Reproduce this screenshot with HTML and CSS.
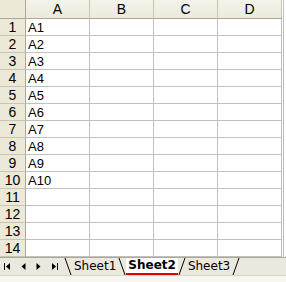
FILE: index.html
```html
<!DOCTYPE html>
<html>

<head>
    <title>Book1</title>
    <link rel="stylesheet" href="styles.css">
</head>

<body>
    <!-- ตารางแผ่นงาน -->
    <div class="sheet">
        <div class="corner"></div>
        <div class="col-head">A</div>
        <div class="col-head">B</div>
        <div class="col-head">C</div>
        <div class="col-head">D</div>

        <div class="row-head">1</div><div class="cell">A1</div><div class="cell"></div><div class="cell"></div><div class="cell"></div>
        <div class="row-head">2</div><div class="cell">A2</div><div class="cell"></div><div class="cell"></div><div class="cell"></div>
        <div class="row-head">3</div><div class="cell">A3</div><div class="cell"></div><div class="cell"></div><div class="cell"></div>
        <div class="row-head">4</div><div class="cell">A4</div><div class="cell"></div><div class="cell"></div><div class="cell"></div>
        <div class="row-head">5</div><div class="cell">A5</div><div class="cell"></div><div class="cell"></div><div class="cell"></div>
        <div class="row-head">6</div><div class="cell">A6</div><div class="cell"></div><div class="cell"></div><div class="cell"></div>
        <div class="row-head">7</div><div class="cell">A7</div><div class="cell"></div><div class="cell"></div><div class="cell"></div>
        <div class="row-head">8</div><div class="cell">A8</div><div class="cell"></div><div class="cell"></div><div class="cell"></div>
        <div class="row-head">9</div><div class="cell">A9</div><div class="cell"></div><div class="cell"></div><div class="cell"></div>
        <div class="row-head">10</div><div class="cell">A10</div><div class="cell"></div><div class="cell"></div><div class="cell"></div>
        <div class="row-head">11</div><div class="cell"></div><div class="cell"></div><div class="cell"></div><div class="cell"></div>
        <div class="row-head">12</div><div class="cell"></div><div class="cell"></div><div class="cell"></div><div class="cell"></div>
        <div class="row-head">13</div><div class="cell"></div><div class="cell"></div><div class="cell"></div><div class="cell"></div>
        <div class="row-head">14</div><div class="cell"></div><div class="cell"></div><div class="cell"></div><div class="cell"></div>
    </div>

    <!-- แถบแท็บแผ่นงาน -->
    <div class="tab-bar">
        <div class="nav">
            <svg width="7" height="7" viewBox="0 0 7 7"><rect x="0" y="0" width="1" height="7" fill="#000"/><path d="M6 0 L2 3.5 L6 7 Z" fill="#000"/></svg>
            <svg width="5" height="7" viewBox="0 0 5 7"><path d="M4.5 0 L0.5 3.5 L4.5 7 Z" fill="#000"/></svg>
            <svg width="5" height="7" viewBox="0 0 5 7"><path d="M0.5 0 L4.5 3.5 L0.5 7 Z" fill="#000"/></svg>
            <svg width="7" height="7" viewBox="0 0 7 7"><path d="M1 0 L5 3.5 L1 7 Z" fill="#000"/><rect x="6" y="0" width="1" height="7" fill="#000"/></svg>
        </div>
        <svg class="slant" width="8" height="17" viewBox="0 0 8 17"><line x1="1" y1="0" x2="7" y2="17" stroke="#000" stroke-width="1"/></svg>
        <span class="tab">Sheet1</span>
        <svg class="slant" width="8" height="17" viewBox="0 0 8 17"><line x1="1" y1="0" x2="7" y2="17" stroke="#000" stroke-width="1"/></svg>
        <span class="tab active">Sheet2</span>
        <svg class="slant" width="8" height="17" viewBox="0 0 8 17"><line x1="7" y1="0" x2="1" y2="17" stroke="#000" stroke-width="1"/></svg>
        <span class="tab">Sheet3</span>
        <svg class="slant" width="8" height="17" viewBox="0 0 8 17"><line x1="7" y1="0" x2="1" y2="17" stroke="#000" stroke-width="1"/></svg>
    </div>

    <!-- แถบเลื่อนด้านล่าง -->
    <div class="bottom-strip"></div>
</body>

</html>
```

FILE: styles.css
```css
body {
    margin: 0;
    background-color: #ffffff;
    font-family: "Liberation Sans", Arial, sans-serif;
    width: 286px;
    overflow: hidden;
}

/* ตาราง */
.sheet {
    display: grid;
    grid-template-columns: 26px repeat(4, 64px);
    grid-template-rows: 19px repeat(14, 17px);
    border-right: 1px solid #c0c0c0;
    width: 283px;
}

.corner,
.col-head,
.row-head {
    background-color: #ece9d8;
    box-sizing: border-box;
    border-right: 1px solid #aca899;
    border-bottom: 1px solid #aca899;
    font-size: 14px;
    color: #000;
    display: flex;
    align-items: center;
    justify-content: center;
}

.col-head {
    background: linear-gradient(#f4f3ea, #ebeadb);
    border-right: 1px solid #c7c5b2;
}

.row-head {
    border-right: 1px solid #aca899;
    border-bottom: 1px solid #c7c5b2;
}

.cell {
    box-sizing: border-box;
    border-right: 1px solid #c0c0c0;
    border-bottom: 1px solid #c0c0c0;
    font-size: 13px;
    padding-left: 2px;
    display: flex;
    align-items: center;
}

/* แท็บ */
.tab-bar {
    height: 17px;
    background-color: #ebe9de;
    border-top: 1px solid #aca899;
    display: flex;
    align-items: center;
    font-family: "DejaVu Sans", Tahoma, sans-serif;
    font-size: 12px;
}

.nav {
    width: 64px;
    display: flex;
    align-items: center;
    gap: 10px;
    padding-left: 4px;
    box-sizing: border-box;
}

.slant {
    display: block;
    flex: none;
}

.tab {
    padding: 0 2px;
    line-height: 17px;
}

.tab.active {
    background-color: #ffffff;
    font-weight: bold;
    border-bottom: 2px solid #e00000;
    line-height: 15px;
    height: 15px;
}

.bottom-strip {
    height: 8px;
    background-color: #f6f5ef;
    border-top: 1px solid #d8d6c8;
}
```
